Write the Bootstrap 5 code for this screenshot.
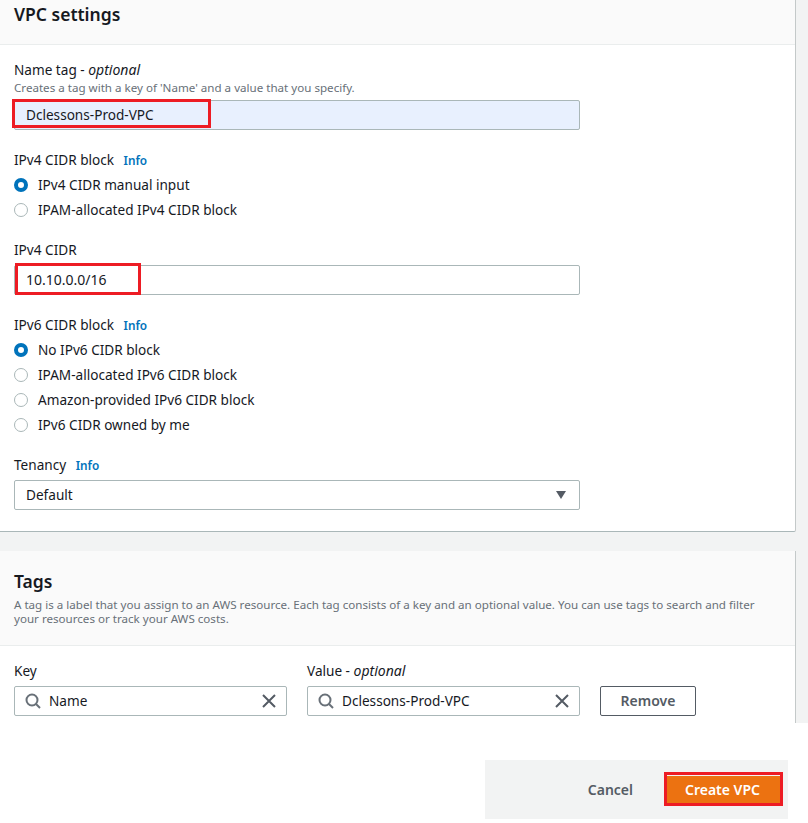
<!DOCTYPE html>
<html lang="en">
<head>
<meta charset="utf-8">
<title>VPC settings</title>
<link href="https://cdn.jsdelivr.net/npm/bootstrap@5.3.0/dist/css/bootstrap.min.css" rel="stylesheet">
<style>
html,body{height:823px;overflow:hidden;background:#fff}
body{font-family:"Noto Sans","Open Sans",sans-serif;font-size:13.6px;line-height:20px;color:#16191f}
.console-area{height:723px;background:#f2f3f3;padding-right:12px;overflow:hidden}
.pane{background:#fff;border-right:1px solid #c4c9c9}
.pane-one{height:532px;border-bottom:1px solid #aab7b8;border-bottom-right-radius:2px}
.pane-two{margin-top:19px;height:172px}
.pane-head{background:#fafafa;border-bottom:1px solid #eaeded;padding:0 14px}
.pane-one .pane-head{height:45px;padding-top:2px}
.pane-two .pane-head{height:95px;padding-top:18px}
.pane-title{font-size:17.5px;line-height:24px;font-weight:600;margin:0;color:#16191f}
.pane-desc{font-size:11.6px;line-height:14px;color:#687078;margin:0}
.pane-two .pane-desc{margin-top:5px}
.pane-body{padding:15px 14px 0;width:594px}
.field-label{display:block;line-height:20px;margin:0;color:#16191f}
.field-label em{font-style:italic;font-size:14px}
.field-hint{font-size:11.6px;line-height:16px;color:#687078;margin-bottom:4px}
.info-link{font-size:11.8px;font-weight:600;color:#0073bb;margin-left:6px;text-decoration:none}
.aws-input{height:30px;border:1px solid #aab7b8;border-radius:2px;background:#fff;padding:0 11px;line-height:28px;color:#16191f}
.aws-filled{background:#e8f0fe}
.digits{font-size:14px}
.aws-radio{height:25px;display:flex;align-items:center;gap:10px;color:#16191f}
.radio-dot{width:14px;height:14px;border-radius:50%;border:1px solid #aab7b8;background:#fff;flex:none}
.radio-dot.on{border:4px solid #0073bb}
.gap-name{margin-top:20px}
.gap-radio{margin-top:2px}
.gap-cidr{margin-top:18px}
.gap-input{margin-top:5px}
.caret{width:0;height:0;margin-right:2px;border-left:5.5px solid transparent;border-right:5.5px solid transparent;border-top:8.5px solid #545b64}
.tag-body{display:flex;gap:20px;padding:15px 14px 0;align-items:flex-end}
.tag-col{width:273px}
.tag-box{height:30px;border:1px solid #aab7b8;border-radius:2px;display:flex;align-items:center;padding:0 9px 0 10px;gap:8px;background:#fff}
.tag-box span{flex:1}
.tag-label{margin-bottom:5px}
.remove-btn{width:96px;height:30px;padding:0;border:1px solid #545b64;border-radius:2px;background:#fff;color:#545b64;font-size:14px;font-weight:600;line-height:28px}
.wizard-foot{width:303px;height:59px;margin:37px 0 0 485px;background:#f2f3f3;padding-right:8px}
.cancel-btn{color:#545b64;font-weight:600;font-size:14px;padding:0;border:0;background:none;margin-right:34px}
.create-btn{width:113px;height:28px;background:#ec7211;color:#fff;border:0;border-radius:0;font-weight:600;font-size:14px;line-height:28px;padding:0 2px 0 0}
.mark-red{position:absolute;border:3px solid #ed1c24;pointer-events:none}
.mark-name{left:12px;top:99px;width:199px;height:29px}
.mark-cidr{left:15px;top:263px;width:126px;height:32px}
.mark-create{left:664px;top:772px;width:119px;height:34px}
</style>
</head>
<body class="position-relative">
<div class="console-area">
  <section class="pane pane-one">
    <div class="pane-head"><h2 class="pane-title">VPC settings</h2></div>
    <div class="pane-body">
      <label class="field-label">Name tag - <em>optional</em></label>
      <div class="field-hint">Creates a tag with a key of 'Name' and a value that you specify.</div>
      <div class="aws-input aws-filled">Dclessons-Prod-VPC</div>
      <div class="gap-name field-label">IPv4 CIDR block <a class="info-link" href="#">Info</a></div>
      <div class="gap-radio">
        <div class="aws-radio"><span class="radio-dot on"></span>IPv4 CIDR manual input</div>
        <div class="aws-radio"><span class="radio-dot"></span>IPAM-allocated IPv4 CIDR block</div>
      </div>
      <div class="gap-cidr field-label">IPv4 CIDR</div>
      <div class="aws-input gap-input digits">10.10.0.0/16</div>
      <div class="gap-name field-label">IPv6 CIDR block <a class="info-link" href="#">Info</a></div>
      <div class="gap-radio">
        <div class="aws-radio"><span class="radio-dot on"></span>No IPv6 CIDR block</div>
        <div class="aws-radio"><span class="radio-dot"></span>IPAM-allocated IPv6 CIDR block</div>
        <div class="aws-radio"><span class="radio-dot"></span>Amazon-provided IPv6 CIDR block</div>
        <div class="aws-radio"><span class="radio-dot"></span>IPv6 CIDR owned by me</div>
      </div>
      <div class="gap-cidr field-label">Tenancy <a class="info-link" href="#">Info</a></div>
      <div class="aws-input gap-input d-flex align-items-center justify-content-between">Default<span class="caret"></span></div>
    </div>
  </section>
  <section class="pane pane-two">
    <div class="pane-head">
      <h2 class="pane-title">Tags</h2>
      <p class="pane-desc">A tag is a label that you assign to an AWS resource. Each tag consists of a key and an optional value. You can use tags to search and filter your resources or track your AWS costs.</p>
    </div>
    <div class="tag-body">
      <div class="tag-col">
        <div class="field-label tag-label">Key</div>
        <div class="tag-box">
          <svg width="16" height="16" viewBox="0 0 16 16" fill="none" stroke="#687078" stroke-width="2"><circle cx="7" cy="7" r="5.5"/><path d="M11 11l4 4"/></svg>
          <span>Name</span>
          <svg width="16" height="16" viewBox="0 0 16 16" fill="none" stroke="#545b64" stroke-width="2"><path d="M2 2l12 12M14 2L2 14"/></svg>
        </div>
      </div>
      <div class="tag-col">
        <div class="field-label tag-label">Value - <em>optional</em></div>
        <div class="tag-box">
          <svg width="16" height="16" viewBox="0 0 16 16" fill="none" stroke="#687078" stroke-width="2"><circle cx="7" cy="7" r="5.5"/><path d="M11 11l4 4"/></svg>
          <span>Dclessons-Prod-VPC</span>
          <svg width="16" height="16" viewBox="0 0 16 16" fill="none" stroke="#545b64" stroke-width="2"><path d="M2 2l12 12M14 2L2 14"/></svg>
        </div>
      </div>
      <button class="remove-btn" type="button">Remove</button>
    </div>
  </section>
</div>
<div class="wizard-foot d-flex align-items-center justify-content-end">
  <button class="cancel-btn" type="button">Cancel</button>
  <button class="create-btn" type="button">Create VPC</button>
</div>
<div class="mark-red mark-name"></div>
<div class="mark-red mark-cidr"></div>
<div class="mark-red mark-create"></div>
<script src="https://cdn.jsdelivr.net/npm/bootstrap@5.3.0/dist/js/bootstrap.bundle.min.js"></script>
</body>
</html>
